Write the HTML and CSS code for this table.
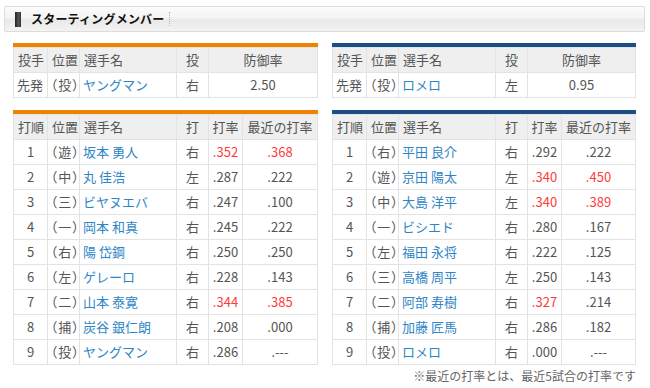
FILE: index.html
```html
<!DOCTYPE html>
<html lang="ja">
<head>
<meta charset="utf-8">
<title>スターティングメンバー</title>
<link rel="stylesheet" href="styles.css">
</head>
<body>
<div class="titlebar">
  <span class="mark"></span>
  <h2 class="title">スターティングメンバー</h2>
  <span class="sep"></span>
</div>
<div class="teams">
  <div class="team team-home">
    <div class="bar"></div>
    <table class="tbl pitcher">
      <colgroup><col class="c1"><col class="c2"><col class="c3"><col class="c4"><col class="c5w"></colgroup>
      <tr class="head"><th class="l">投手</th><th class="l">位置</th><th class="l">選手名</th><th>投</th><th>防御率</th></tr>
      <tr><td class="l">先発</td><td class="l pos">（投）</td><td class="l"><a>ヤングマン</a></td><td>右</td><td>2.50</td></tr>
    </table>
    <div class="bar bar2"></div>
    <table class="tbl">
      <colgroup><col class="c1"><col class="c2"><col class="c3"><col class="c4"><col class="c5"><col class="c6"></colgroup>
      <tr class="head"><th class="l">打順</th><th class="l">位置</th><th class="l">選手名</th><th>打</th><th>打率</th><th>最近の打率</th></tr>
      <tr><td>1</td><td class="l pos">（遊）</td><td class="l"><a>坂本 勇人</a></td><td>右</td><td class="red">.352</td><td class="red">.368</td></tr>
      <tr><td>2</td><td class="l pos">（中）</td><td class="l"><a>丸 佳浩</a></td><td>左</td><td>.287</td><td>.222</td></tr>
      <tr><td>3</td><td class="l pos">（三）</td><td class="l"><a>ビヤヌエバ</a></td><td>右</td><td>.247</td><td>.100</td></tr>
      <tr><td>4</td><td class="l pos">（一）</td><td class="l"><a>岡本 和真</a></td><td>右</td><td>.245</td><td>.222</td></tr>
      <tr><td>5</td><td class="l pos">（右）</td><td class="l"><a>陽 岱鋼</a></td><td>右</td><td>.250</td><td>.250</td></tr>
      <tr><td>6</td><td class="l pos">（左）</td><td class="l"><a>ゲレーロ</a></td><td>右</td><td>.228</td><td>.143</td></tr>
      <tr><td>7</td><td class="l pos">（二）</td><td class="l"><a>山本 泰寛</a></td><td>右</td><td class="red">.344</td><td class="red">.385</td></tr>
      <tr><td>8</td><td class="l pos">（捕）</td><td class="l"><a>炭谷 銀仁朗</a></td><td>右</td><td>.208</td><td>.000</td></tr>
      <tr><td>9</td><td class="l pos">（投）</td><td class="l"><a>ヤングマン</a></td><td>右</td><td>.286</td><td>.---</td></tr>
    </table>
  </div>
  <div class="team team-away">
    <div class="bar"></div>
    <table class="tbl pitcher">
      <colgroup><col class="c1"><col class="c2"><col class="c3"><col class="c4"><col class="c5w"></colgroup>
      <tr class="head"><th class="l">投手</th><th class="l">位置</th><th class="l">選手名</th><th>投</th><th>防御率</th></tr>
      <tr><td class="l">先発</td><td class="l pos">（投）</td><td class="l"><a>ロメロ</a></td><td>左</td><td>0.95</td></tr>
    </table>
    <div class="bar bar2"></div>
    <table class="tbl">
      <colgroup><col class="c1"><col class="c2"><col class="c3"><col class="c4"><col class="c5"><col class="c6"></colgroup>
      <tr class="head"><th class="l">打順</th><th class="l">位置</th><th class="l">選手名</th><th>打</th><th>打率</th><th>最近の打率</th></tr>
      <tr><td>1</td><td class="l pos">（右）</td><td class="l"><a>平田 良介</a></td><td>右</td><td>.292</td><td>.222</td></tr>
      <tr><td>2</td><td class="l pos">（遊）</td><td class="l"><a>京田 陽太</a></td><td>左</td><td class="red">.340</td><td class="red">.450</td></tr>
      <tr><td>3</td><td class="l pos">（中）</td><td class="l"><a>大島 洋平</a></td><td>左</td><td class="red">.340</td><td class="red">.389</td></tr>
      <tr><td>4</td><td class="l pos">（一）</td><td class="l"><a>ビシエド</a></td><td>右</td><td>.280</td><td>.167</td></tr>
      <tr><td>5</td><td class="l pos">（左）</td><td class="l"><a>福田 永将</a></td><td>右</td><td>.222</td><td>.125</td></tr>
      <tr><td>6</td><td class="l pos">（三）</td><td class="l"><a>高橋 周平</a></td><td>左</td><td>.250</td><td>.143</td></tr>
      <tr><td>7</td><td class="l pos">（二）</td><td class="l"><a>阿部 寿樹</a></td><td>右</td><td class="red">.327</td><td>.214</td></tr>
      <tr><td>8</td><td class="l pos">（捕）</td><td class="l"><a>加藤 匠馬</a></td><td>右</td><td>.286</td><td>.182</td></tr>
      <tr><td>9</td><td class="l pos">（投）</td><td class="l"><a>ロメロ</a></td><td>右</td><td>.000</td><td>.---</td></tr>
    </table>
    <p class="note">※最近の打率とは、最近5試合の打率です</p>
  </div>
</div>
</body>
</html>
```
FILE: styles.css
```css
html, body {
  margin: 0;
  padding: 0;
  background: #fff;
  font-family: "Noto Sans CJK JP", "Noto Sans", sans-serif;
  color: #555;
}

.titlebar {
  margin: 6px 5px 0 4px;
  height: 24px;
  border: 1px solid #dcdcdc;
  border-radius: 2px;
  background: linear-gradient(to bottom, #fcfcfc 0%, #f4f4f4 45%, #e9e9e9 55%, #f3f3f3 100%);
  display: flex;
  align-items: center;
  box-sizing: content-box;
}

.mark {
  width: 6px;
  height: 15px;
  margin-left: 10px;
  background: linear-gradient(to right, #222, #555 60%, #333);
}

.title {
  margin: 0 0 0 10px;
  font-size: 12px;
  font-weight: bold;
  color: #111;
  letter-spacing: 0.2px;
  line-height: 1;
}

.sep {
  width: 0;
  height: 14px;
  margin-left: 5px;
  border-left: 1px dotted #b5b5b5;
}

.teams {
  display: flex;
  gap: 14px;
  padding: 11px 0 0 13px;
}

.team-home { width: 305px; }
.team-away { width: 304px; }

.bar {
  height: 4px;
  background: #ef8200;
}
.team-away .bar { background: #1b4d88; }
.bar2 { margin-top: 12px; }

.tbl {
  width: 100%;
  border-collapse: collapse;
  table-layout: fixed;
  font-size: 13px;
}

.tbl th, .tbl td {
  height: 24px;
  padding: 0;
  border: 1px solid #e3e3e3;
  text-align: center;
  font-weight: normal;
  white-space: nowrap;
  overflow: hidden;
  line-height: 24px;
}

.tbl .head th {
  background: #efefef;
  color: #555;
}

.tbl th.l, .tbl td.l {
  text-align: left;
  padding-left: 4px;
}

.tbl td.l { padding-left: 3px; }

.tbl td.pos {
  padding-left: 3px;
  font-feature-settings: "halt";
  letter-spacing: 0.8px;
}

.tbl a {
  color: #2f86c6;
  text-decoration: none;
}

.tbl td.red { color: #ff3b3b; }

.c1 { width: 34px; }
.c2 { width: 32px; }
.c3 { width: 97px; }
.c4 { width: 32px; }
.c5 { width: 34px; }
.c5w { width: auto; }
.c6 { width: auto; }

.note {
  margin: 4px 0 0;
  text-align: right;
  font-size: 12px;
  color: #666;
  line-height: 14px;
}
```
